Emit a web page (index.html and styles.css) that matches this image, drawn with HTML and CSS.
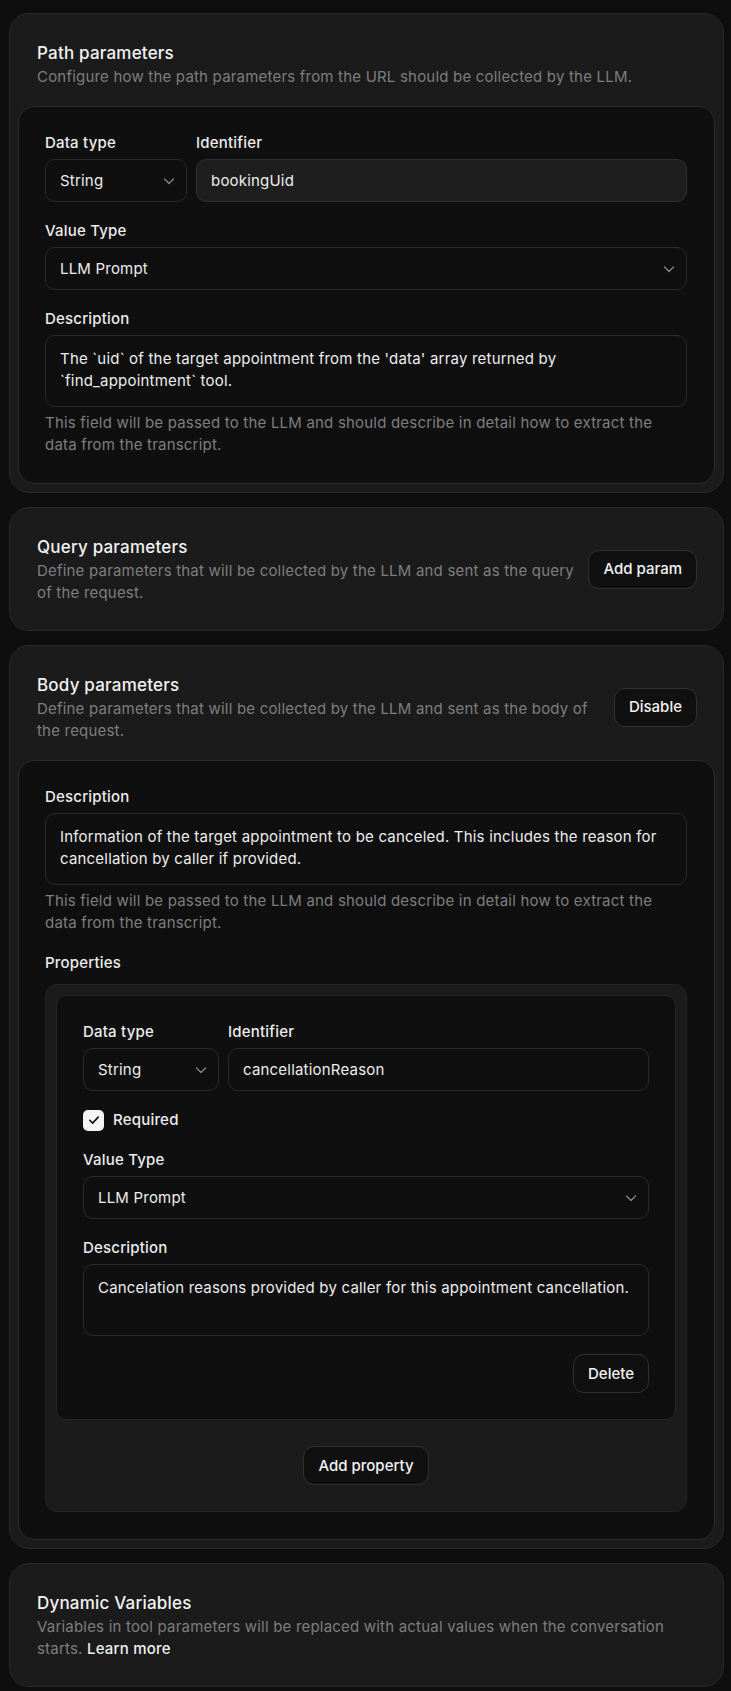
FILE: index.html
```html
<!DOCTYPE html>
<html lang="en">
<head>
<meta charset="utf-8">
<title>Tool parameters</title>
<link rel="stylesheet" href="styles.css">
</head>
<body>
<main class="page">

  <section class="card">
    <header class="card-head">
      <div class="head-text">
        <h2 class="title">Path parameters</h2>
        <p class="sub">Configure how the path parameters from the URL should be collected by the LLM.</p>
      </div>
    </header>
    <div class="panel">
      <div class="row">
        <div class="field type-field">
          <label class="label">Data type</label>
          <button class="control select" type="button"><span>String</span>
            <svg class="chev" width="16" height="16" viewBox="0 0 16 16"><path d="M3.5 6l4.5 4.5 4.5-4.5" fill="none" stroke="currentColor" stroke-width="1.2" stroke-linecap="round" stroke-linejoin="round"/></svg>
          </button>
        </div>
        <div class="field grow">
          <label class="label">Identifier</label>
          <input class="control input readonly" type="text" value="bookingUid" readonly>
        </div>
      </div>
      <div class="field">
        <label class="label">Value Type</label>
        <button class="control select" type="button"><span>LLM Prompt</span>
          <svg class="chev" width="16" height="16" viewBox="0 0 16 16"><path d="M3.5 6l4.5 4.5 4.5-4.5" fill="none" stroke="currentColor" stroke-width="1.2" stroke-linecap="round" stroke-linejoin="round"/></svg>
        </button>
      </div>
      <div class="field">
        <label class="label">Description</label>
        <textarea class="control textarea" rows="2">The `uid` of the target appointment from the 'data' array returned by `find_appointment` tool.</textarea>
        <p class="hint">This field will be passed to the LLM and should describe in detail how to extract the data from the transcript.</p>
      </div>
    </div>
  </section>

  <section class="card">
    <header class="card-head">
      <div class="head-text">
        <h2 class="title">Query parameters</h2>
        <p class="sub">Define parameters that will be collected by the LLM and sent as the query of the request.</p>
      </div>
      <button class="btn" type="button">Add param</button>
    </header>
  </section>

  <section class="card">
    <header class="card-head">
      <div class="head-text">
        <h2 class="title">Body parameters</h2>
        <p class="sub">Define parameters that will be collected by the LLM and sent as the body of the request.</p>
      </div>
      <button class="btn" type="button">Disable</button>
    </header>
    <div class="panel">
      <div class="field">
        <label class="label">Description</label>
        <textarea class="control textarea" rows="2">Information of the target appointment to be canceled. This includes the reason for cancellation by caller if provided.</textarea>
        <p class="hint">This field will be passed to the LLM and should describe in detail how to extract the data from the transcript.</p>
      </div>
      <div class="field">
        <label class="label label-props">Properties</label>
        <div class="props">
          <div class="prop">
            <div class="row">
              <div class="field type-field small">
                <label class="label">Data type</label>
                <button class="control select" type="button"><span>String</span>
                  <svg class="chev" width="16" height="16" viewBox="0 0 16 16"><path d="M3.5 6l4.5 4.5 4.5-4.5" fill="none" stroke="currentColor" stroke-width="1.2" stroke-linecap="round" stroke-linejoin="round"/></svg>
                </button>
              </div>
              <div class="field grow">
                <label class="label">Identifier</label>
                <input class="control input" type="text" value="cancellationReason">
              </div>
            </div>
            <div class="check-row">
              <button class="checkbox" type="button" role="checkbox" aria-checked="true">
                <svg width="14" height="14" viewBox="0 0 14 14"><path d="M2.8 7.3l2.8 2.8 5.6-6" fill="none" stroke="#111" stroke-width="1.6" stroke-linecap="round" stroke-linejoin="round"/></svg>
              </button>
              <span class="check-label">Required</span>
            </div>
            <div class="field">
              <label class="label">Value Type</label>
              <button class="control select" type="button"><span>LLM Prompt</span>
                <svg class="chev" width="16" height="16" viewBox="0 0 16 16"><path d="M3.5 6l4.5 4.5 4.5-4.5" fill="none" stroke="currentColor" stroke-width="1.2" stroke-linecap="round" stroke-linejoin="round"/></svg>
              </button>
            </div>
            <div class="field">
              <label class="label">Description</label>
              <textarea class="control textarea" rows="2">Cancelation reasons provided by caller for this appointment cancellation.</textarea>
            </div>
            <div class="actions">
              <button class="btn" type="button">Delete</button>
            </div>
          </div>
          <div class="add-row">
            <button class="btn" type="button">Add property</button>
          </div>
        </div>
      </div>
    </div>
  </section>

  <section class="card">
    <header class="card-head">
      <div class="head-text">
        <h2 class="title">Dynamic Variables</h2>
        <p class="sub">Variables in tool parameters will be replaced with actual values when the conversation starts. <a class="link" href="#">Learn more</a></p>
      </div>
    </header>
  </section>

</main>
</body>
</html>
```

FILE: styles.css
```css
* { box-sizing: border-box; }

html, body {
  margin: 0;
  padding: 0;
  background: #0e0e0e;
}

body {
  font-family: Inter, "Noto Sans", sans-serif;
  font-size: 15px;
  line-height: 22px;
  letter-spacing: 0.2px;
  color: #ececec;
}

.page {
  display: flex;
  flex-direction: column;
  gap: 14px;
  padding: 13px 7px 4px 9px;
}

.card {
  background: #1b1b1b;
  border: 1px solid #292929;
  border-radius: 20px;
  padding: 8px;
}

.card-head {
  display: flex;
  align-items: center;
  gap: 12px;
  padding: 18px 18px 18px 19px;
}

.head-text {
  flex: 1;
  min-width: 0;
}

.title {
  margin: 0;
  font-size: 17px;
  line-height: 26px;
  font-weight: 500;
  color: #f3f3f3;
}

.sub {
  margin: 0;
  font-size: 15px;
  line-height: 22px;
  color: #7e7e7e;
}

.link {
  color: #f0f0f0;
  font-weight: 500;
  text-decoration: none;
}

.btn {
  flex: none;
  height: 39px;
  padding: 0 14px;
  border: 1px solid #303030;
  border-radius: 11px;
  background: #101010;
  color: #f3f3f3;
  font-family: inherit;
  font-size: 15px;
  font-weight: 500;
  line-height: 22px;
  cursor: pointer;
}

.panel {
  background: #0f0f0f;
  border: 1px solid #2c2c2c;
  border-radius: 16px;
  padding: 25px 27px 27px 26px;
  display: flex;
  flex-direction: column;
  gap: 18px;
}

.row {
  display: flex;
  gap: 9px;
}

.field {
  display: flex;
  flex-direction: column;
  min-width: 0;
}

.grow { flex: 1; }

.type-field { width: 142px; flex: none; }
.type-field.small { width: 136px; }

.label {
  font-size: 15px;
  line-height: 22px;
  font-weight: 500;
  color: #ececec;
  margin-bottom: 5px;
}

.label-props { margin-bottom: 10px; }

.control {
  width: 100%;
  border: 1px solid #2a2a2a;
  border-radius: 10px;
  background: #0f0f0f;
  color: #ededed;
  font-family: inherit;
  font-size: 15px;
  line-height: 22px;
  letter-spacing: inherit;
  outline: none;
}

.select {
  height: 43px;
  padding: 0 9px 0 14px;
  display: flex;
  align-items: center;
  justify-content: space-between;
  text-align: left;
  cursor: pointer;
}

.chev { color: #8a8a8a; flex: none; }

.input {
  height: 43px;
  padding: 0 14px;
}

.input.readonly {
  background: #1e1e1e;
  border-color: #303030;
}

.textarea {
  height: 72px;
  padding: 12px 14px;
  resize: none;
  display: block;
  overflow: hidden;
}

.hint {
  margin: 5px 0 0;
  color: #7e7e7e;
  font-size: 15px;
  line-height: 22px;
}

.props {
  background: #1b1b1b;
  border: 1px solid #232323;
  border-radius: 12px;
  padding: 10px;
}

.prop {
  background: #0f0f0f;
  border: 1px solid #262626;
  border-radius: 10px;
  padding: 25px 26px 26px 26px;
  display: flex;
  flex-direction: column;
  gap: 18px;
}

.check-row {
  display: flex;
  align-items: center;
  gap: 9px;
}

.checkbox {
  width: 21px;
  height: 21px;
  padding: 0;
  border: none;
  border-radius: 5px;
  background: #f4f4f4;
  display: flex;
  align-items: center;
  justify-content: center;
  cursor: pointer;
}

.check-label {
  font-weight: 500;
  color: #ececec;
}

.actions {
  display: flex;
  justify-content: flex-end;
}

.add-row {
  display: flex;
  justify-content: center;
  padding: 26px 0 16px;
}
```
